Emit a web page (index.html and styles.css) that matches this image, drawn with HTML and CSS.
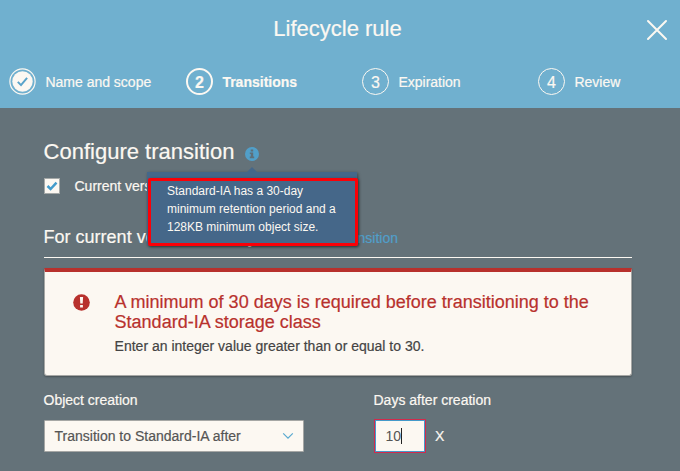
FILE: index.html
```html
<!DOCTYPE html>
<html lang="en">
<head>
<meta charset="utf-8">
<title>Lifecycle rule</title>
<link rel="stylesheet" href="styles.css">
</head>
<body>
<header class="header">
  <div class="title-bar">
    <h1 class="title">Lifecycle rule</h1>
    <svg class="close" width="22" height="22" viewBox="0 0 22 22"><path d="M2 2L20 20M20 2L2 20"/></svg>
  </div>
  <nav class="steps">
    <div class="step">
      <svg class="step-done" width="28" height="28" viewBox="0 0 28 28"><circle class="ring" cx="13.500" cy="13.500" r="12.6"/><circle class="disc" cx="13.500" cy="13.500" r="10.2"/><path class="tick" d="M8.800 13.900L12 17.100L18.100 9.900"/></svg>
      <span>Name and scope</span>
    </div>
    <div class="step active"><span class="num">2</span><span>Transitions</span></div>
    <div class="step"><span class="num">3</span><span>Expiration</span></div>
    <div class="step"><span class="num">4</span><span>Review</span></div>
  </nav>
</header>
<main class="content">
  <div class="heading">
    <h2>Configure transition</h2>
    <span class="info">
      <svg width="14" height="14" viewBox="0 0 14 14"><circle cx="7" cy="7" r="7"/><path d="M5.7 2.5h2.5v2H5.7zM4.8 5.5h3.4v4h1v1.7H4.8V9.500h1V7.100h-1z"/></svg>
      <span class="tooltip"><span class="tooltip-text">Standard-IA has a 30-day minimum retention period and a 128KB minimum object size.</span></span>
    </span>
  </div>
  <label class="check-row">
    <span class="checkbox"><svg width="12" height="12" viewBox="0 0 12 12"><path d="M1.500 6L4.600 9L10.500 2.700"/></svg></span>
    <span>Current version</span>
  </label>
  <div class="section-title">
    <h3>For current versions of objects</h3>
    <a class="add">+ Add transition</a>
  </div>
  <section class="alert">
    <svg class="alert-icon" width="17" height="17" viewBox="0 0 17 17"><circle cx="8.500" cy="8.500" r="8.300"/><path d="M6.900 3h3.200l-.4 6.600H7.300zM7.100 11h2.800v2.600H7.100z"/></svg>
    <div>
      <h4>A minimum of 30 days is required before transitioning to the Standard-IA storage class</h4>
      <p>Enter an integer value greater than or equal to 30.</p>
    </div>
  </section>
  <div class="fields">
    <div class="field">
      <span class="label">Object creation</span>
      <div class="select"><span>Transition to Standard-IA after</span><svg width="12" height="8" viewBox="0 0 12 8"><path d="M1.200 1.300L6 6.100L10.800 1.300"/></svg></div>
    </div>
    <div class="field">
      <span class="label">Days after creation</span>
      <div class="days"><span class="input">10<i class="caret"></i></span><span class="remove">X</span></div>
    </div>
  </div>
</main>
</body>
</html>
```
FILE: styles.css
```css
* { box-sizing: border-box; }
body {
  margin: 0;
  height: 471px;
  overflow: hidden;
  background: #647279;
  color: #fcf8f2;
  font: 14px/18px "Liberation Sans", Arial, sans-serif;
  -webkit-text-stroke: .2px currentColor;
}
h1, h2, h3, h4, p { margin: 0; font-weight: 400; }
svg { display: block; flex: none; }

.header { height: 108px; background: #70b0cf; }
.title-bar {
  height: 58px;
  display: grid;
  grid-template-columns: 1fr auto 1fr;
  align-items: center;
  padding: 0 12px 0 7px;
}
.title { grid-column: 2; font-size: 22px; line-height: 26px; }
.close { justify-self: end; margin-top: 2px; }
.close path { fill: none; stroke: #fcf8f2; stroke-width: 2; stroke-linecap: round; }
.steps {
  display: grid;
  grid-template-columns: 177px 176px 176px 1fr;
  padding: 10px 0 0 9px;
}
.step { display: flex; align-items: center; height: 28px; gap: 9.400px; white-space: nowrap; }
.step-done { margin-right: -1px; }
.step-done .ring { fill: none; stroke: #fcf8f2; stroke-width: 1.2; }
.step-done .disc { fill: #fcf8f2; }
.step-done .tick { fill: none; stroke: #59a3ca; stroke-width: 2; }
.num {
  width: 27px;
  height: 27px;
  margin-top: -1px;
  border: 1px solid #fcf8f2;
  border-radius: 50%;
  text-align: center;
  font-size: 16px;
  line-height: 27px;
}
.active { font-weight: 700; }
.active .num { border-width: 2px; line-height: 25px; }

.content { padding: 30px 48px 0 44px; }
.heading { display: flex; align-items: center; height: 28px; gap: 11px; }
.heading h2 { width: 190.400px; margin-left: -.4px; white-space: nowrap; font-size: 22px; line-height: 28px; }
.info { position: relative; margin-top: 4px; }
.info circle { fill: #519fc9; }
.info path { fill: #5e6f79; }
.tooltip {
  position: absolute;
  z-index: 2;
  left: -98px;
  top: 25px;
  width: 210px;
  height: 73px;
  background: #456789;
  box-shadow: 1px 1px 3px rgba(0, 0, 0, .4);
  font-size: 12px;
  line-height: 18px;
  -webkit-text-stroke: 0;
}
.tooltip::before {
  content: "";
  position: absolute;
  left: 100px;
  top: -5px;
  border: 5px solid transparent;
  border-top: 0;
  border-bottom-color: #456789;
}
.tooltip-text {
  display: block;
  width: 210px;
  height: 68px;
  margin: 6px 0 0 1px;
  padding: 1px 8px 0 16px;
  border: 3px solid #fb0007;
  border-radius: 2px;
  box-shadow: 1px 1px 3px rgba(0, 0, 0, .45);
}

.check-row { display: flex; align-items: center; height: 18px; margin-top: 11px; gap: 14.500px; }
.checkbox {
  width: 16px;
  height: 16px;
  border: 1px solid #a5a9a8;
  background: #fcf8f2;
  padding: 1px;
}
.checkbox path { fill: none; stroke: #439bcb; stroke-width: 2.500; }

.section-title {
  display: flex;
  align-items: baseline;
  height: 33px;
  margin-top: 30px;
  padding-right: 234px;
  border-bottom: 1px solid #fcf8f2;
  white-space: nowrap;
}
.section-title h3 { margin-left: -.4px; font-size: 18px; line-height: 24px; }
.add { margin-left: auto; color: #519fc9; }

.alert {
  display: flex;
  gap: 24.600px;
  height: 108px;
  margin-top: 10px;
  padding: 20px 30px 0 28px;
  border: 1px solid #a6a7a5;
  border-top: 4px solid #b8312d;
  border-radius: 1px 1px 3px 3px;
  background: #fcf8f2;
  box-shadow: 0 1px 2px rgba(0, 0, 0, .3);
}
.alert-icon { margin-top: 2px; }
.alert-icon circle { fill: #b8312d; }
.alert-icon path { fill: #fcf8f2; }
.alert h4 { color: #b8312d; font-size: 18px; line-height: 20px; }
.alert p { margin-top: 5px; color: #444; }

.fields { display: grid; grid-template-columns: 330px 1fr; margin-top: 15px; }
.label { display: block; margin-left: -.5px; }
.select {
  display: flex;
  align-items: center;
  justify-content: space-between;
  width: 260px;
  height: 32px;
  margin-top: 11px;
  padding: 0 9px 0 9.500px;
  border: 1px solid #a6a7a5;
  border-radius: 1px;
  background: #fcf8f2;
  color: #555;
}
.select path { fill: none; stroke: #59a9d0; stroke-width: 1.200; }
.days { display: flex; align-items: center; gap: 9px; margin-top: 10px; }
.input {
  display: flex;
  align-items: center;
  width: 52px;
  height: 34px;
  padding-left: 10.500px;
  border: 1px solid #d3294b;
  background: #fcf8f2;
  box-shadow: inset 0 0 0 1px #459aca;
  color: #555;
  -webkit-text-stroke: 0;
}
.caret { width: 1px; height: 16px; background: #222; }
.remove { line-height: 18px; }
```
